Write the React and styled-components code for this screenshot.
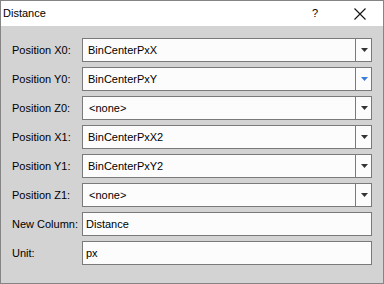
import styled, { createGlobalStyle } from 'styled-components';

const GlobalStyle = createGlobalStyle`
  html, body {
    margin: 0;
    padding: 0;
    background: #ffffff;
  }
  * {
    box-sizing: border-box;
  }
`;

const rows = [
    { label: 'Position X0:', value: 'BinCenterPxX', kind: 'combo' },
    { label: 'Position Y0:', value: 'BinCenterPxY', kind: 'combo', active: true },
    { label: 'Position Z0:', value: '<none>', kind: 'combo', none: true },
    { label: 'Position X1:', value: 'BinCenterPxX2', kind: 'combo' },
    { label: 'Position Y1:', value: 'BinCenterPxY2', kind: 'combo' },
    { label: 'Position Z1:', value: '<none>', kind: 'combo', none: true },
    { label: 'New Column:', value: 'Distance', kind: 'edit' },
    { label: 'Unit:', value: 'px', kind: 'edit' },
];

function Arrow({ active }) {
    return (
        <svg width="7" height="4" viewBox="0 0 7 4">
            <path d="M0 0 H7 L3.5 4 Z" fill={active ? '#3b7ddb' : '#333333'} />
        </svg>
    );
}

export default function App() {
    return (
        <Window>
            <GlobalStyle />
            <TitleBar>
                <Title>Distance</Title>
                <Help>?</Help>
                <Close>
                    <svg width="12" height="12" viewBox="0 0 12 12">
                        <path d="M0.5 0.5 L11.5 11.5 M11.5 0.5 L0.5 11.5" stroke="#111" strokeWidth="1.1" />
                    </svg>
                </Close>
            </TitleBar>
            <Body>
                {rows.map((row) => (
                    <Row key={row.label}>
                        <Label>{row.label}</Label>
                        {row.kind === 'combo' ? (
                            <Combo>
                                <ComboText $none={row.none}>{row.value}</ComboText>
                                <ComboButton>
                                    <Arrow active={row.active} />
                                </ComboButton>
                            </Combo>
                        ) : (
                            <Edit>{row.value}</Edit>
                        )}
                    </Row>
                ))}
            </Body>
        </Window>
    );
}

const Window = styled.div`
  width: 384px;
  height: 284px;
  border: 1px solid #858585;
  display: flex;
  flex-direction: column;
  font-family: "Liberation Sans", Arial, sans-serif;
  font-size: 11px;
  color: #000;
`;

const TitleBar = styled.div`
  height: 25px;
  background: #ffffff;
  display: flex;
  align-items: center;
  padding-left: 2px;
`;

const Title = styled.div`
  flex: 1;
  padding-bottom: 1px;
`;

const Help = styled.div`
  width: 10px;
  margin-right: 32px;
  padding-bottom: 1px;
`;

const Close = styled.div`
  width: 12px;
  height: 12px;
  margin-right: 17px;
  margin-top: 1px;
  display: flex;
`;

const Body = styled.div`
  flex: 1;
  background: #d3d3d3;
  padding: 12px 11px 0 11px;
  display: flex;
  flex-direction: column;
  gap: 5px;
`;

const Row = styled.div`
  display: grid;
  grid-template-columns: 70px 290px;
  align-items: center;
  height: 24px;
`;

const Label = styled.div`
  white-space: nowrap;
`;

const Field = styled.div`
  height: 24px;
  border: 1px solid #7a7a7a;
  background: #fcfcfc;
  display: flex;
`;

const Combo = styled(Field)`
  align-items: stretch;
`;

const ComboText = styled.div`
  flex: 1;
  display: flex;
  align-items: center;
  padding-left: ${(p) => (p.$none ? '6px' : '5px')};
`;

const ComboButton = styled.div`
  width: 16px;
  border-left: 1px solid #7a7a7a;
  display: flex;
  align-items: center;
  justify-content: center;
  padding-left: 1px;
`;

const Edit = styled(Field)`
  align-items: center;
  padding-left: 3px;
`;
